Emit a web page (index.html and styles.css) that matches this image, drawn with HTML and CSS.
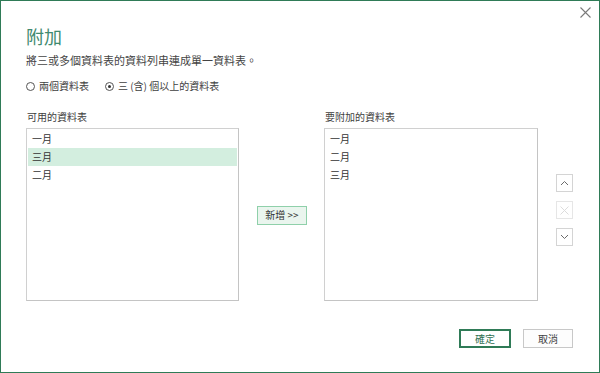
FILE: index.html
```html
<!DOCTYPE html>
<html lang="zh-Hant">
<head>
<meta charset="utf-8">
<link rel="stylesheet" href="styles.css">
</head>
<body>
<div class="dialog">
  <button class="close" aria-label="關閉">
    <svg width="11" height="11" viewBox="0 0 11 11"><path d="M0.5 0.5 L10.5 10.5 M10.5 0.5 L0.5 10.5" stroke="#7a7a7a" stroke-width="1.1" fill="none"/></svg>
  </button>
  <h1 class="title">附加</h1>
  <p class="desc">將三或多個資料表的資料列串連成單一資料表。</p>
  <div class="radios">
    <label class="radio"><span class="dot"></span>兩個資料表</label>
    <label class="radio checked"><span class="dot"></span>三 (含) 個以上的資料表</label>
  </div>
  <div class="lists">
    <div class="col col-left">
      <div class="label">可用的資料表</div>
      <div class="listbox">
        <div class="item">一月</div>
        <div class="item selected">三月</div>
        <div class="item">二月</div>
      </div>
    </div>
    <div class="col-mid">
      <button class="add">新增 &gt;&gt;</button>
    </div>
    <div class="col col-right">
      <div class="label">要附加的資料表</div>
      <div class="listbox">
        <div class="item">一月</div>
        <div class="item">二月</div>
        <div class="item">三月</div>
      </div>
    </div>
    <div class="col-side">
      <button class="sq">
        <svg width="9" height="6" viewBox="0 0 9 6"><path d="M1 5 L4.5 1.5 L8 5" stroke="#6a6a6a" stroke-width="1" fill="none"/></svg>
      </button>
      <button class="sq disabled">
        <svg width="9" height="9" viewBox="0 0 9 9"><path d="M0.5 0.5 L8.5 8.5 M8.5 0.5 L0.5 8.5" stroke="#dcdcdc" stroke-width="1" fill="none"/></svg>
      </button>
      <button class="sq">
        <svg width="9" height="6" viewBox="0 0 9 6"><path d="M1 1 L4.5 4.5 L8 1" stroke="#6a6a6a" stroke-width="1" fill="none"/></svg>
      </button>
    </div>
  </div>
  <div class="footer">
    <button class="btn ok">確定</button>
    <button class="btn cancel">取消</button>
  </div>
</div>
</body>
</html>
```

FILE: styles.css
```css
html, body {
  margin: 0;
  padding: 0;
  background: #ffffff;
}

.dialog {
  position: relative;
  width: 600px;
  height: 373px;
  box-sizing: border-box;
  border: 1px solid #2f7b57;
  padding: 23px 26px 0 25px;
  font-family: "Noto Sans CJK TC", "Noto Sans", sans-serif;
  color: #404040;
  background: #fff;
}

.close {
  position: absolute;
  top: 6px;
  right: 8px;
  width: 11px;
  height: 11px;
  padding: 0;
  border: 0;
  background: none;
  display: flex;
}

.title {
  margin: 0;
  height: 24px;
  line-height: 24px;
  font-size: 18px;
  font-weight: normal;
  color: #3f8a70;
}

.desc {
  margin: 4px 0 0 0;
  font-size: 11px;
  line-height: 16px;
  color: #444;
}

.radios {
  margin-top: 10px;
  display: flex;
  align-items: center;
  gap: 16px;
  font-size: 10px;
  line-height: 16px;
  color: #404040;
}

.radio {
  display: flex;
  align-items: center;
  gap: 4px;
}

.dot {
  width: 9px;
  height: 9px;
  box-sizing: border-box;
  border: 1px solid #555;
  border-radius: 50%;
  display: flex;
  align-items: center;
  justify-content: center;
}

.radio.checked .dot::after {
  content: "";
  width: 3px;
  height: 3px;
  border-radius: 50%;
  background: #333;
}

.lists {
  margin-top: 15px;
  display: flex;
}

.col {
  display: flex;
  flex-direction: column;
}

.col-left { width: 213px; }
.col-right { width: 214px; }

.label {
  font-size: 10px;
  line-height: 16px;
  margin-bottom: 3px;
  margin-left: 1px;
  color: #404040;
}

.listbox {
  height: 173px;
  box-sizing: border-box;
  border: 1px solid #d0d0d0;
  border-right-color: #c4c4c4;
  border-bottom-color: #c4c4c4;
  padding: 1px 1px;
  background: #fff;
}

.item {
  height: 18px;
  line-height: 18px;
  padding-left: 4px;
  font-size: 10px;
  color: #333;
}

.item.selected {
  background: #d3eedf;
}

.col-mid {
  width: 85px;
  box-sizing: border-box;
  padding: 91px 0 0 18px;
}

.add {
  width: 50px;
  height: 19px;
  padding: 0;
  box-sizing: border-box;
  border: 1px solid #8fd0aa;
  background: #eaf5ee;
  font-family: inherit;
  font-size: 10px;
  line-height: 16px;
  color: #333;
}

.col-side {
  margin-left: 18px;
  padding-top: 65px;
  display: flex;
  flex-direction: column;
  gap: 9px;
}

.sq {
  width: 17px;
  height: 18px;
  padding: 0;
  box-sizing: border-box;
  border: 1px solid #d4d4d4;
  background: #fff;
  display: flex;
  align-items: center;
  justify-content: center;
}

.sq.disabled {
  border-color: #e6e6e6;
}

.footer {
  margin-top: 28px;
  display: flex;
  justify-content: flex-end;
  gap: 12px;
}

.btn {
  height: 19px;
  padding: 0;
  box-sizing: border-box;
  font-family: inherit;
  font-size: 10px;
  line-height: 15px;
  background: #fff;
}

.ok {
  width: 52px;
  border: 2px solid #2f7b57;
  color: #2f6f52;
}

.cancel {
  width: 50px;
  border: 1px solid #c8c8c8;
  background: #fdfdfd;
  color: #444;
}
```
